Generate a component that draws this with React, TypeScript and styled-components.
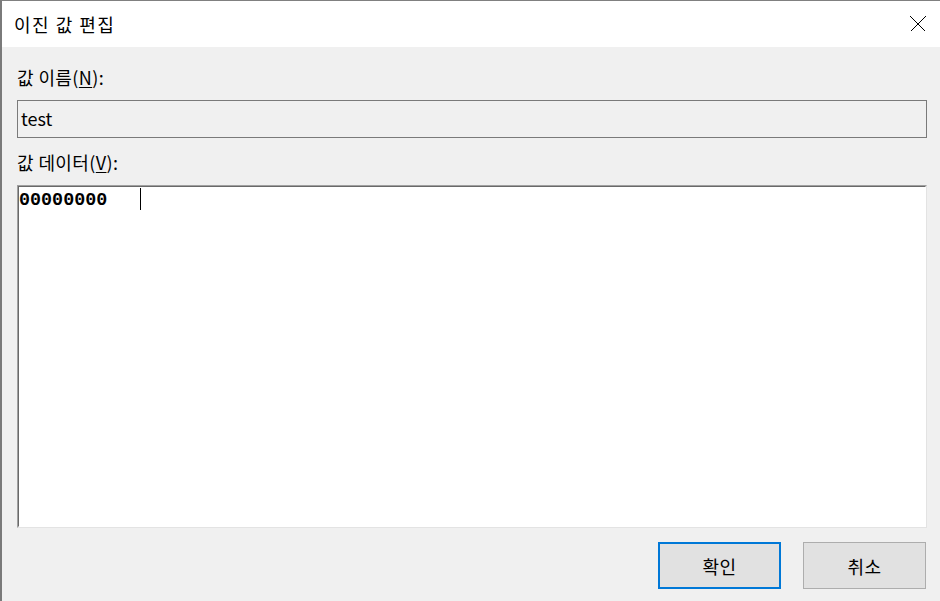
import React from "react";
import styled, { createGlobalStyle } from "styled-components";

const GlobalStyle = createGlobalStyle`
  html, body {
    margin: 0;
    padding: 0;
    width: 100%;
    height: 100%;
    overflow: hidden;
    background: #f0f0f0;
  }
  #root {
    height: 100%;
  }
`;

const uiFont = `"Noto Sans CJK KR", sans-serif`;

const Window = styled.div`
  box-sizing: border-box;
  height: 601px;
  width: 940px;
  display: flex;
  flex-direction: column;
  border-top: 1px solid #808080;
  border-left: 2px solid #7a7a7a;
  background: #f0f0f0;
  font-family: ${uiFont};
  color: #000;
`;

const TitleBar = styled.div`
  height: 46px;
  flex: none;
  display: flex;
  align-items: center;
  justify-content: space-between;
  background: #ffffff;
  padding-left: 12px;
  padding-right: 14px;
`;

const Title = styled.div`
  font-size: 18px;
  line-height: 24px;
  letter-spacing: 1.5px;
`;

const CloseButton = styled.div`
  width: 16px;
  height: 16px;
  display: flex;
  align-items: center;
  justify-content: center;
`;

const Body = styled.div`
  flex: 1;
  display: flex;
  flex-direction: column;
  padding: 18px 13px 12px 15px;
  min-height: 0;
`;

const Label = styled.div<{ $gap: number }>`
  font-size: 18px;
  line-height: 24px;
  letter-spacing: 0.4px;
  margin-bottom: ${(p) => p.$gap}px;

  u {
    text-underline-offset: 2px;
  }
`;

const NameField = styled.div`
  box-sizing: border-box;
  height: 38px;
  border: 1px solid #7a7a7a;
  background: #f0f0f0;
  display: flex;
  align-items: center;
  padding-left: 3px;
  padding-bottom: 3px;
  font-size: 18px;
  margin-bottom: 12px;
`;

const DataField = styled.div`
  box-sizing: border-box;
  height: 343px;
  flex: none;
  background: #ffffff;
  border-top: 1px solid #a0a0a0;
  border-left: 1px solid #a0a0a0;
  border-right: 1px solid #e3e3e3;
  border-bottom: 1px solid #e3e3e3;
  margin-bottom: 14px;
`;

const DataInner = styled.div`
  height: 100%;
  box-sizing: border-box;
  border-top: 1px solid #696969;
  border-left: 1px solid #696969;
  border-right: 1px solid #ffffff;
  border-bottom: 1px solid #ffffff;
  padding-top: 4px;
  display: flex;
  align-items: flex-start;
`;

const HexLine = styled.div`
  font-family: "Liberation Mono", monospace;
  font-weight: bold;
  font-size: 18.4px;
  line-height: 20px;
  display: flex;
  align-items: flex-start;
`;

const Caret = styled.span`
  display: inline-block;
  width: 1px;
  height: 22px;
  background: #000;
  margin-left: 33px;
  margin-top: -3px;
`;

const ButtonRow = styled.div`
  display: flex;
  justify-content: flex-end;
  gap: 22px;
  padding-right: 1px;
`;

const Button = styled.div<{ $default?: boolean }>`
  box-sizing: border-box;
  width: 123px;
  height: 47px;
  background: #e1e1e1;
  border: ${(p) => (p.$default ? "2px solid #0078d7" : "1px solid #adadad")};
  display: flex;
  align-items: center;
  justify-content: center;
  font-size: 18px;
  letter-spacing: 0.5px;
`;

export default function App() {
  return (
    <>
      <GlobalStyle />
      <Window>
        <TitleBar>
          <Title>이진 값 편집</Title>
          <CloseButton>
            <svg width="16" height="16" viewBox="0 0 16 16" shapeRendering="crispEdges">
              <path d="M0.5 0.5 L15.5 15.5 M15.5 0.5 L0.5 15.5" stroke="#000" strokeWidth="1" fill="none" />
            </svg>
          </CloseButton>
        </TitleBar>
        <Body>
          <Label $gap={11}>
            값 이름(<u>N</u>):
          </Label>
          <NameField>test</NameField>
          <Label $gap={11}>
            값 데이터(<u>V</u>):
          </Label>
          <DataField>
            <DataInner>
              <HexLine>
                00000000
                <Caret />
              </HexLine>
            </DataInner>
          </DataField>
          <ButtonRow>
            <Button $default>확인</Button>
            <Button>취소</Button>
          </ButtonRow>
        </Body>
      </Window>
    </>
  );
}
